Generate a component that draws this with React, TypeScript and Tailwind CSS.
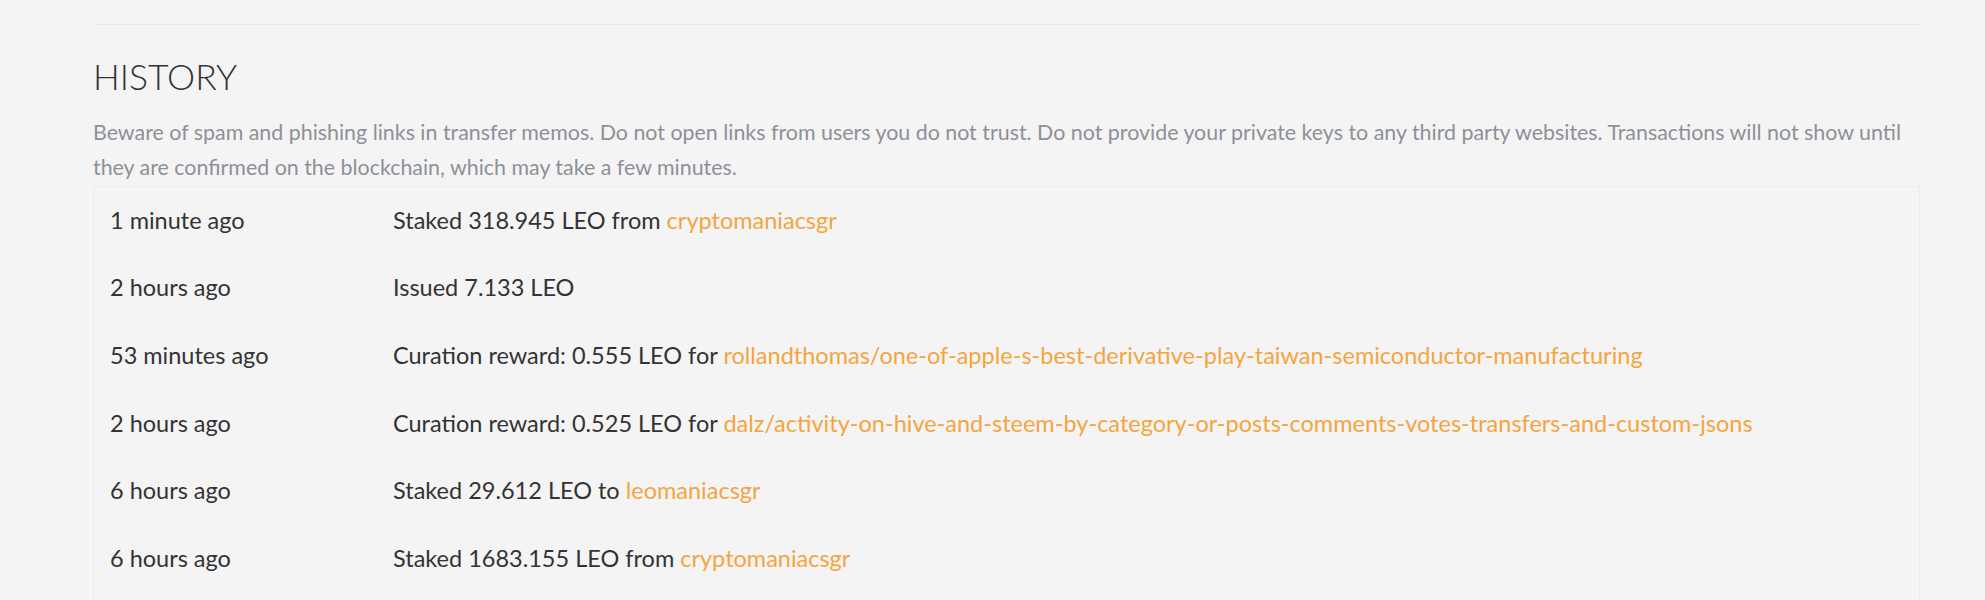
import React from 'react';

type Entry = {
  time: string;
  text: string;
  link?: string;
};

// 交易历史记录
const history: Entry[] = [
  { time: '1 minute ago', text: 'Staked 318.945 LEO from ', link: 'cryptomaniacsgr' },
  { time: '2 hours ago', text: 'Issued 7.133 LEO' },
  {
    time: '53 minutes ago',
    text: 'Curation reward: 0.555 LEO for ',
    link: 'rollandthomas/one-of-apple-s-best-derivative-play-taiwan-semiconductor-manufacturing',
  },
  {
    time: '2 hours ago',
    text: 'Curation reward: 0.525 LEO for ',
    link: 'dalz/activity-on-hive-and-steem-by-category-or-posts-comments-votes-transfers-and-custom-jsons',
  },
  { time: '6 hours ago', text: 'Staked 29.612 LEO to ', link: 'leomaniacsgr' },
  { time: '6 hours ago', text: 'Staked 1683.155 LEO from ', link: 'cryptomaniacsgr' },
];

function HistoryRow({ entry }: { entry: Entry }) {
  return (
    <div className="flex items-center h-[67.6px] pl-[16px] text-[23.5px] text-[#333333]">
      <div className="w-[283px] shrink-0">{entry.time}</div>
      <div className="whitespace-nowrap">
        {entry.text}
        {entry.link && (
          <a href="#" className="text-[#f5a540]">
            {entry.link}
          </a>
        )}
      </div>
    </div>
  );
}

export default function App() {
  return (
    <div className="min-h-[600px] bg-[#f4f4f4] font-['Lato','Liberation_Sans',sans-serif] pl-[93px] pr-[65px] pt-[24px]">
      <div className="border-t border-[#ebebeb]" />

      <h2 className="mt-[31px] text-[35.5px] leading-[1.2] font-light text-[#333333]">HISTORY</h2>

      <p className="mt-[16px] text-[21.4px] leading-[35px] text-[#8d9098]">
        Beware of spam and phishing links in transfer memos. Do not open links from users you do not trust. Do not
        provide your private keys to any third party websites. Transactions will not show until they are confirmed on
        the blockchain, which may take a few minutes.
      </p>

      <div className="mt-[1px] border-t border-l border-r border-[#ececec] h-[420px]">
        {history.map((entry, i) => (
          <HistoryRow key={i} entry={entry} />
        ))}
      </div>
    </div>
  );
}
